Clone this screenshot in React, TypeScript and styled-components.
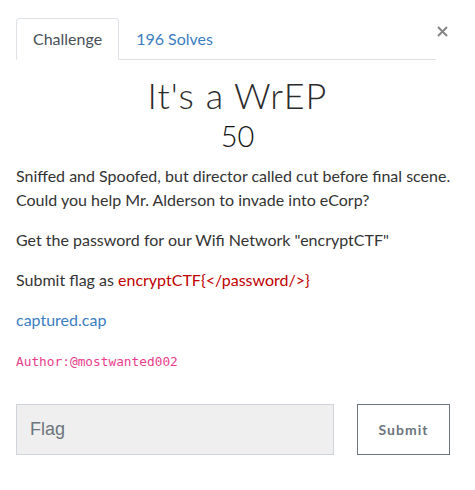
import styled, { createGlobalStyle } from "styled-components";

const GlobalStyle = createGlobalStyle`
  body {
    margin: 0;
    background: #fff;
    font-family: "Lato", "Liberation Sans", sans-serif;
    color: #212529;
  }
`;

const Modal = styled.div`
  width: 475px;
  box-sizing: border-box;
  padding: 18px 16px 16px;
`;

const Header = styled.div`
  display: flex;
  align-items: flex-start;
`;

const Tabs = styled.ul`
  display: flex;
  width: 420px;
  margin: 0;
  padding: 0;
  list-style: none;
  border-bottom: 1px solid #dee2e6;
`;

const Tab = styled.li<{ $active?: boolean }>`
  margin-bottom: -1px;
  padding: 7px 16px 8px;
  font-size: 16px;
  line-height: 25px;
  border: 1px solid ${(p) => (p.$active ? "#dee2e6" : "transparent")};
  border-bottom-color: ${(p) => (p.$active ? "#fff" : "transparent")};
  border-radius: 4px 4px 0 0;
  background: ${(p) => (p.$active ? "#fff" : "transparent")};
  color: ${(p) => (p.$active ? "#495057" : "#3b7dc1")};
`;

const Close = styled.button`
  display: flex;
  margin: 8px 0 0 1px;
  padding: 0;
  border: 0;
  background: none;
  color: #858585;
`;

const Title = styled.h2`
  margin: 15px 0 0;
  text-align: center;
  font-family: "Lato", sans-serif;
  font-weight: 300;
  font-size: 36px;
  line-height: 40px;
  letter-spacing: 1px;
  color: #2b2b2b;
`;

const Points = styled.h3`
  margin: 0 0 8px;
  text-align: center;
  font-weight: 300;
  font-size: 29px;
  line-height: 41px;
  color: #111;
`;

const Para = styled.p`
  margin: 0 0 16px;
  font-size: 16px;
  line-height: 24px;
  color: #333;
`;

const Red = styled.span`
  color: #c00000;
`;

const FileLink = styled.a`
  color: #3b7dc1;
  text-decoration: none;
`;

const Code = styled.code`
  font-family: "DejaVu Sans Mono", monospace;
  font-size: 12.8px;
  color: #e83e8c;
`;

const Form = styled.form`
  display: flex;
  gap: 23px;
  margin-top: 30px;
`;

const Input = styled.input`
  width: 318px;
  height: 51px;
  box-sizing: border-box;
  padding: 0 13px;
  border: 1px solid #ced4da;
  background: #efefef;
  font-family: "Liberation Sans", sans-serif;
  font-size: 18px;
  color: #495057;
  &::placeholder {
    color: #6c757d;
  }
`;

const Submit = styled.button`
  width: 93px;
  height: 51px;
  border: 1px solid #6c757d;
  background: #fff;
  font-family: "Lato", sans-serif;
  font-weight: 700;
  font-size: 14px;
  letter-spacing: 1px;
  color: #6c757d;
`;

const App = () => {
  return (
    <>
      <GlobalStyle />
      <Modal>
        <Header>
          <Tabs>
            <Tab $active>Challenge</Tab>
            <Tab>196 Solves</Tab>
          </Tabs>
          <Close aria-label="Close">
            <svg width="11" height="11" viewBox="0 0 11 11">
              <path d="M1 1L10 10M10 1L1 10" stroke="currentColor" strokeWidth="2" />
            </svg>
          </Close>
        </Header>
        <Title>It's a WrEP</Title>
        <Points>50</Points>
        <Para>
          Sniffed and Spoofed, but director called cut before final scene.
          Could you help Mr. Alderson to invade into eCorp?
        </Para>
        <Para>Get the password for our Wifi Network "encryptCTF"</Para>
        <Para>
          Submit flag as <Red>encryptCTF{"{</password/>}"}</Red>
        </Para>
        <Para>
          <FileLink href="#">captured.cap</FileLink>
        </Para>
        <Para>
          <Code>Author:@mostwanted002</Code>
        </Para>
        <Form onSubmit={(e) => e.preventDefault()}>
          <Input placeholder="Flag" />
          <Submit type="submit">Submit</Submit>
        </Form>
      </Modal>
    </>
  );
};

export default App;
